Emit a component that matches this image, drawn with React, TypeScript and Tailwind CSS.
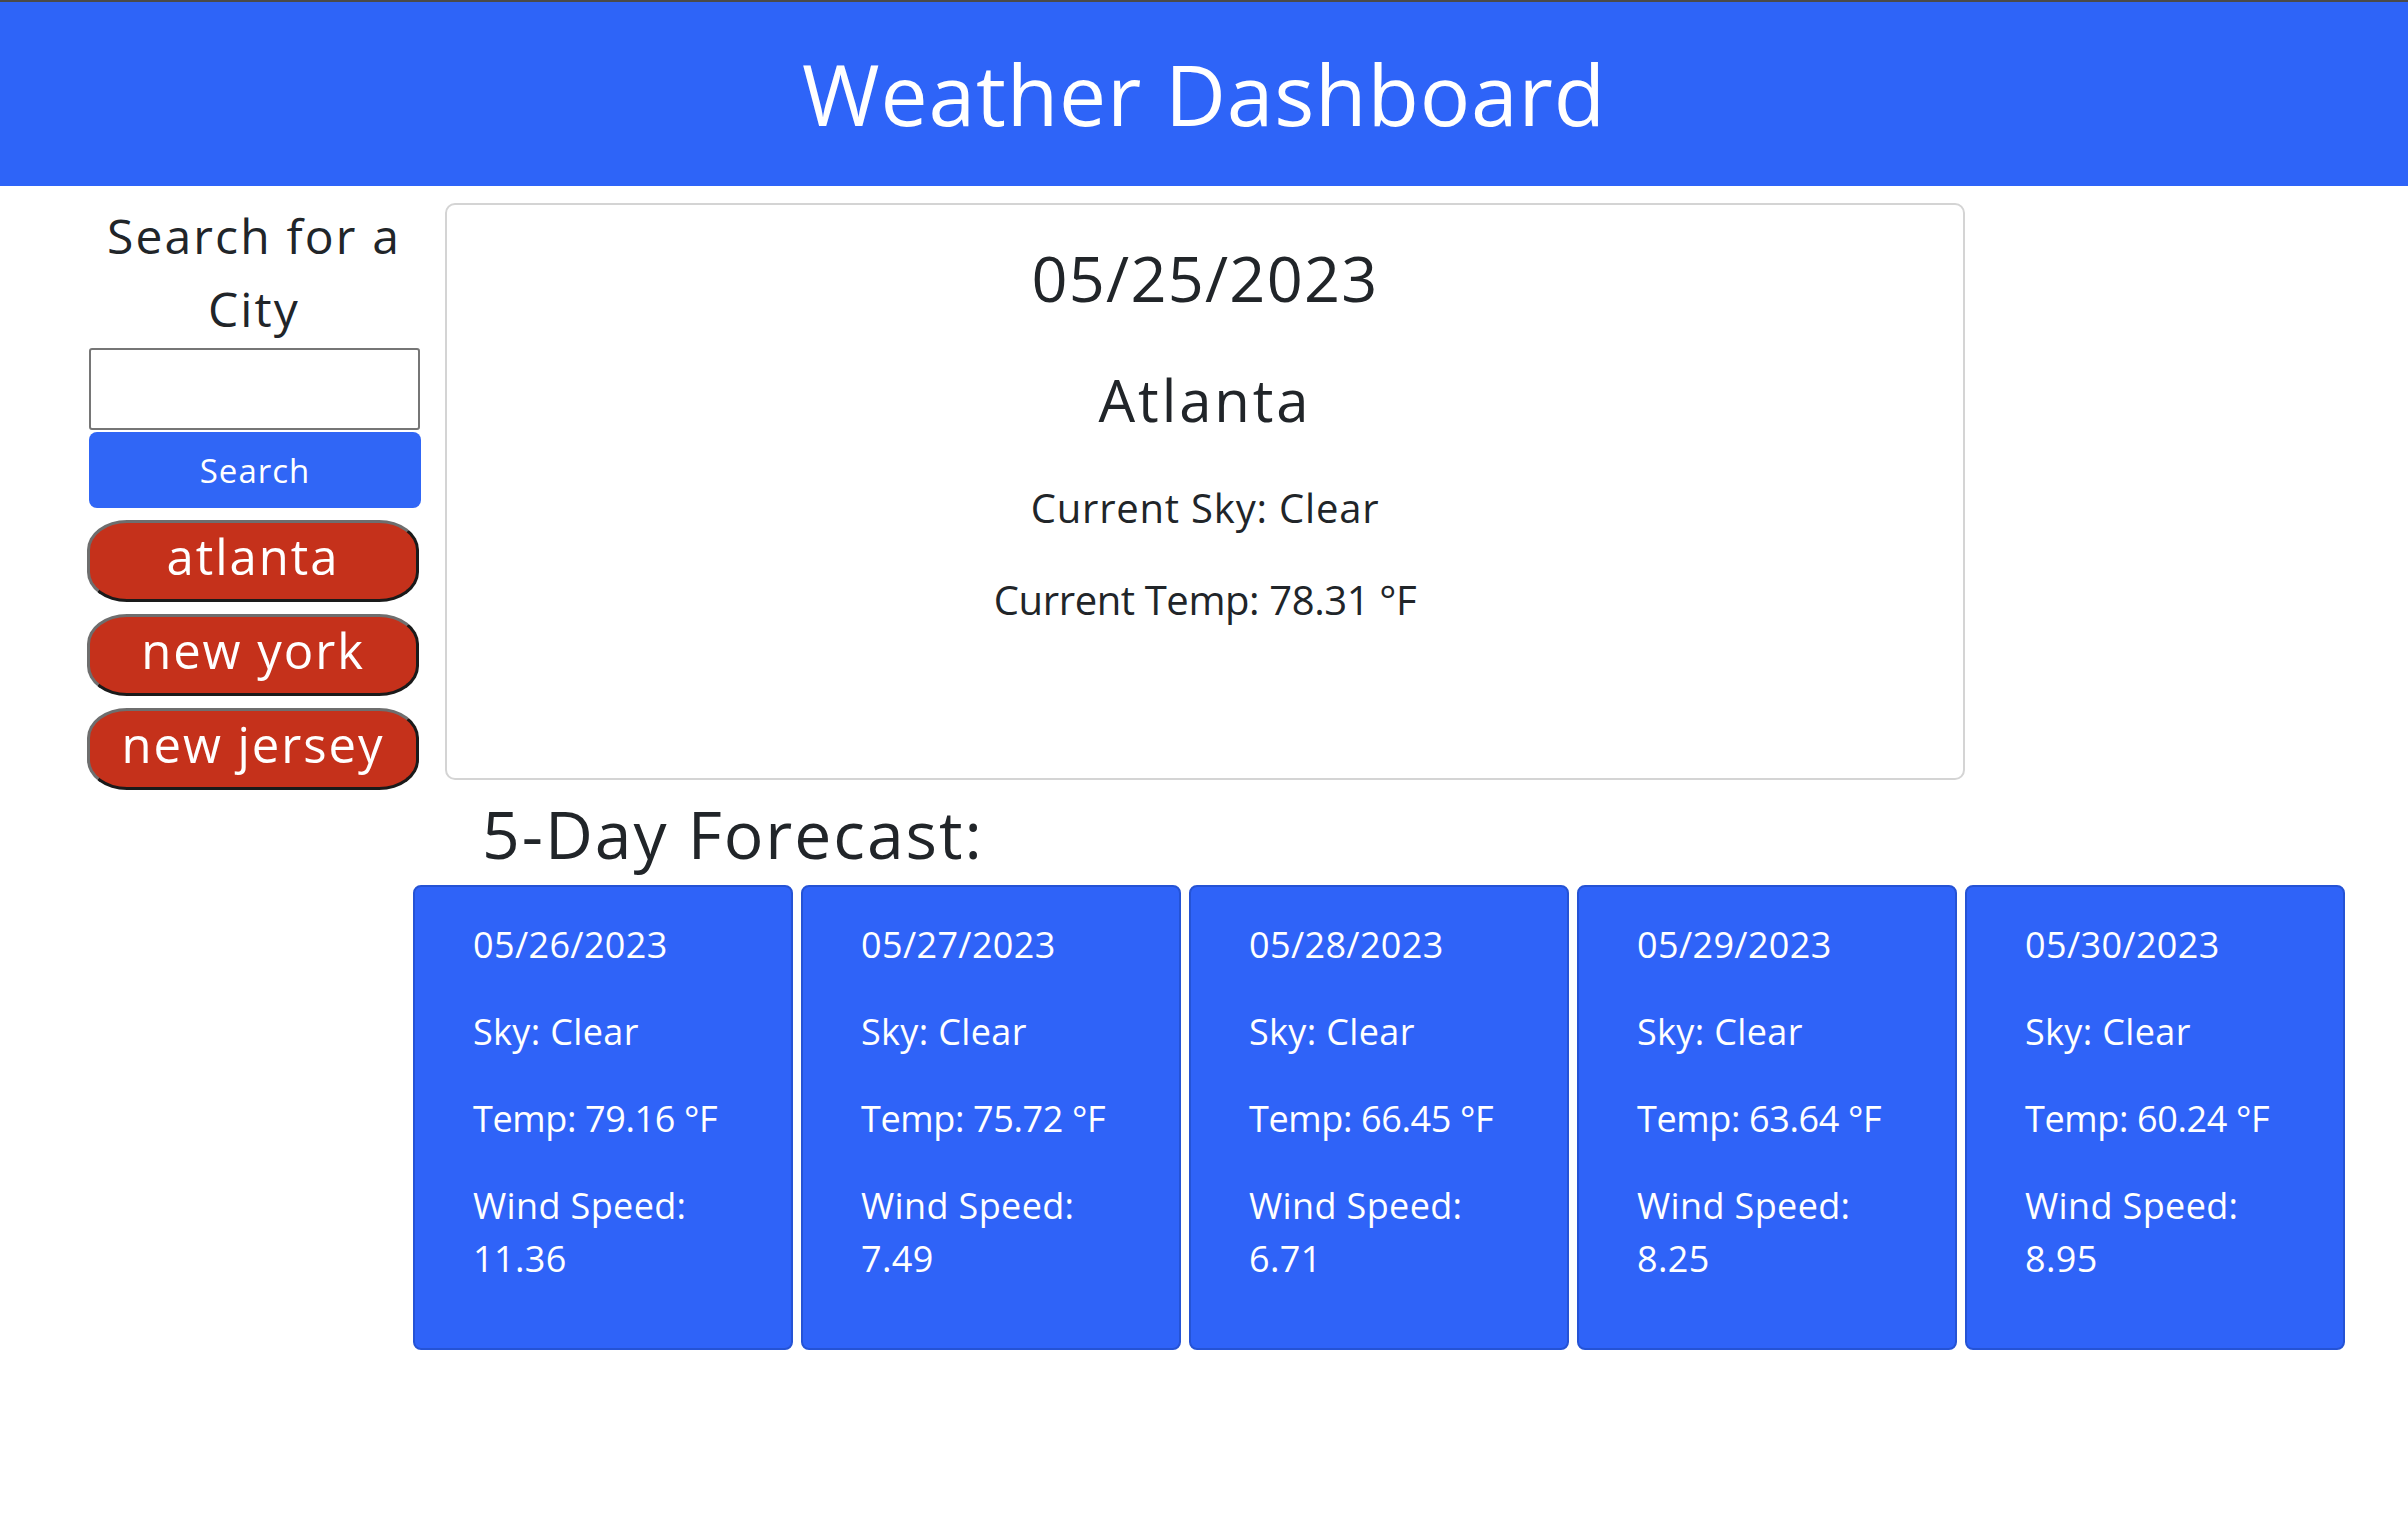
const cities = ['atlanta', 'new york', 'new jersey']

const forecast = [
  { date: '05/26/2023', sky: 'Clear', temp: '79.16', wind: '11.36' },
  { date: '05/27/2023', sky: 'Clear', temp: '75.72', wind: '7.49' },
  { date: '05/28/2023', sky: 'Clear', temp: '66.45', wind: '6.71' },
  { date: '05/29/2023', sky: 'Clear', temp: '63.64', wind: '8.25' },
  { date: '05/30/2023', sky: 'Clear', temp: '60.24', wind: '8.95' }
]

export default function App() {
  return (
    <div className="min-h-screen bg-white font-['Open_Sans',sans-serif] text-[#212529]">
      {/* Header */}
      <header className="h-[186px] border-t-2 border-[#4a4a4a] bg-[#2e64f8] flex items-center justify-center">
        <h1 className="text-[84px] leading-none font-normal text-white tracking-[0.01em]">Weather Dashboard</h1>
      </header>

      <div className="flex">
        {/* Sidebar */}
        <aside className="ml-[87px] w-[334px] flex flex-col">
          <h2 className="mt-[13px] text-[48px] leading-[73px] text-center tracking-[0.045em]">
            Search for a<br />City
          </h2>
          <input
            type="text"
            className="mt-[3px] ml-[2px] w-[331px] h-[82px] border-2 border-[#767676] rounded-[3px] px-3 text-[32px] outline-none"
          />
          <button className="mt-[2px] ml-[2px] w-[332px] h-[76px] rounded-[8px] bg-[#3066f6] text-white text-[33px] leading-none tracking-[0.03em]">
            Search
          </button>
          {cities.map((city) => (
            <button
              key={city}
              className="mt-[12px] w-[332px] h-[82px] rounded-[40px/30px] border-[3px] border-t-[#6e6e6e] border-l-[#6e6e6e] border-b-[#1a1a1a] border-r-[#1a1a1a] bg-[#c5311b] text-white text-[49px] leading-none pb-[9px] tracking-[0.04em]"
            >
              {city}
            </button>
          ))}
        </aside>

        {/* Main */}
        <main className="ml-[24px] flex flex-col">
          <section className="mt-[17px] w-[1520px] h-[577px] border-2 border-[#d4d4d4] rounded-[10px] flex flex-col items-center text-center pt-[41px]">
            <h2 className="text-[63px] leading-none tracking-[0.02em]">05/25/2023</h2>
            <h3 className="mt-[62px] text-[58px] leading-none tracking-[0.05em]">Atlanta</h3>
            <p className="mt-[59px] text-[40px] leading-none tracking-[0.02em]">Current Sky: Clear</p>
            <p className="mt-[52px] text-[40px] leading-none tracking-[-0.01em]">Current Temp: 78.31 °F</p>
          </section>

          <section className="-ml-[32px]">
            <h2 className="mt-[20px] ml-[69px] text-[66px] leading-none tracking-[0.03em]">5-Day Forecast:</h2>
            <div className="mt-[19px] flex gap-[8px]">
              {forecast.map((day) => (
                <div
                  key={day.date}
                  className="w-[380px] h-[465px] rounded-[8px] border-2 border-[#2553d5] bg-[#2f63f8] text-white pl-[58px] pt-[31px] text-[36px] leading-[53px] tracking-[0.01em]"
                >
                  <p className="whitespace-nowrap">{day.date}</p>
                  <p className="mt-[34px] whitespace-nowrap">Sky: {day.sky}</p>
                  <p className="mt-[34px] whitespace-nowrap tracking-[-0.01em]">Temp: {day.temp} °F</p>
                  <p className="mt-[34px]">
                    Wind Speed:
                    <br />
                    {day.wind}
                  </p>
                </div>
              ))}
            </div>
          </section>
        </main>
      </div>
    </div>
  )
}
